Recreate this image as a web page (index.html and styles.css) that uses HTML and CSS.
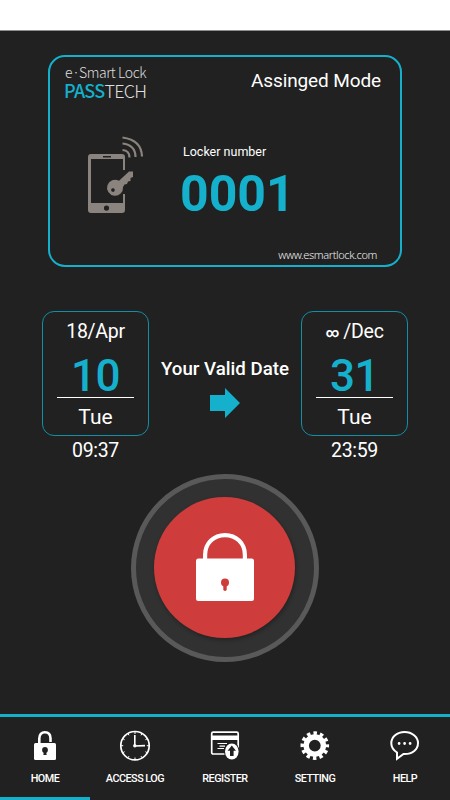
FILE: index.html
```html
<!DOCTYPE html>
<html lang="en">
<head>
<meta charset="utf-8">
<title>e-Smart Lock</title>
<link rel="stylesheet" href="styles.css">
</head>
<body>
<div class="status-bar"></div>
<main class="content">
  <section class="card">
    <header class="card-head">
      <div class="brand">
        <div class="brand-top">e·Smart Lock</div>
        <div class="brand-name"><b>PASS</b>TECH</div>
      </div>
      <div class="mode">Assinged Mode</div>
    </header>
    <div class="card-body">
      <svg class="phone" width="60" height="80" viewBox="0 0 60 80">
        <g fill="#8b837e">
          <path fill-rule="evenodd" d="M3 18H34Q37 18 37 21V34H35V23H3V67H35V58H37V74Q37 77 34 77H3Q0 77 0 74V21Q0 18 3 18ZM15 20V21.600H23V20ZM18.500 69.500A2.600 2.600 0 1 0 18.500 74.700A2.600 2.600 0 1 0 18.500 69.500Z"/>
          <path fill-rule="evenodd" d="M45 36V41L42.500 42V45L40 45.500L39 48L36.500 48.500L35 51A8 8 0 1 1 31 44.800L41 35.500H45ZM25 52.200a1.800 1.800 0 1 0 1.500 2.700a1.800 1.800 0 0 0 -1.500 -2.700Z"/>
        </g>
        <g fill="none" stroke="#8b837e" stroke-width="2.200">
          <path d="M34.500 14Q41.500 14.500 41.500 21.500"/>
          <path d="M34.500 7.500Q47.500 9 47.500 21"/>
          <path d="M34.500 1.500Q53.500 4 54 20.500"/>
        </g>
      </svg>
      <div class="locker">
        <div class="locker-label">Locker number</div>
        <div class="locker-number">0001</div>
      </div>
    </div>
    <footer class="site">www.esmartlock.com</footer>
  </section>

  <section class="validity">
    <div class="date">
      <div class="date-box">
        <div class="month">18/Apr</div>
        <div class="day">10</div>
        <div class="weekday">Tue</div>
      </div>
      <div class="time">09:37</div>
    </div>
    <div class="between">
      <div class="between-label">Your Valid Date</div>
      <svg width="30" height="30" viewBox="0 0 30 30"><path fill="#14b0cc" d="M0 7H15V0L30 15L15 30V23H0Z"/></svg>
    </div>
    <div class="date">
      <div class="date-box">
        <div class="month"><span class="infinity">∞</span> /Dec</div>
        <div class="day">31</div>
        <div class="weekday">Tue</div>
      </div>
      <div class="time">23:59</div>
    </div>
  </section>

  <div class="ring">
    <div class="lock-button">
      <svg width="58" height="68" viewBox="0 0 58 68">
        <path fill="none" stroke="#fff" stroke-width="4.200" d="M9.100 28V22C9.100 10 18 2.100 29 2.100S48.900 10 48.900 22V28"/>
        <rect y="25.500" width="58" height="42.500" rx="2.500" fill="#fff"/>
        <circle cx="29" cy="49.500" r="4" fill="#ce3d3c"/>
        <path stroke="#ce3d3c" stroke-width="3.400" stroke-linecap="round" d="M29 50V56.300"/>
      </svg>
    </div>
  </div>
</main>

<nav class="tabs">
  <div class="tab active">
    <svg width="32" height="32" viewBox="0 0 32 32">
      <path fill="none" stroke="#fff" stroke-width="2.600" d="M10.300 13V8.500C10.300 4.500 12.500 2.300 15.900 2.300S21.500 4.500 21.500 8.500V12"/>
      <rect x="5" y="13" width="22" height="17" rx="1.500" fill="#fff"/>
      <circle cx="16" cy="20" r="2.900" fill="#212121"/>
      <path fill="#212121" d="M14.900 20H17.100L17.600 25H14.400Z"/>
    </svg>
    <span>HOME</span>
  </div>
  <div class="tab">
    <svg width="32" height="32" viewBox="0 0 32 32" fill="none" stroke="#fff">
      <circle cx="16" cy="15.700" r="14.200" stroke-width="1.700"/>
      <path stroke-width="1" d="M16 2V4M16 27.500V29.500M2 15.700H4.200M27.800 15.700H30M9 3.600L10 5.300M23 3.600L22 5.300M9 27.800L10 26.100M23 27.800L22 26.100M3.900 8.700L5.600 9.700M28.100 8.700L26.400 9.700M3.900 22.700L5.600 21.700M28.100 22.700L26.400 21.700"/>
      <path stroke-width="1.600" d="M15.800 5V16L26 15.600"/>
      <circle cx="15.800" cy="15.800" r="1.700" fill="#fff" stroke="none"/>
    </svg>
    <span>ACCESS LOG</span>
  </div>
  <div class="tab">
    <svg width="32" height="32" viewBox="0 0 32 32">
      <rect x="2.700" y="2.200" width="26.500" height="21.800" rx="1.500" fill="none" stroke="#fff" stroke-width="1.700"/>
      <path fill="#fff" d="M3 5.500H29V10H3Z"/>
      <path stroke="#fff" stroke-width="1.200" d="M8.500 13.500H18M10.500 16.200H16M8.500 18.500H15"/>
      <ellipse cx="22.800" cy="21.500" rx="7.800" ry="8.800" fill="#212121"/>
      <ellipse cx="22.800" cy="21.500" rx="6.800" ry="8" fill="#fff"/>
      <path fill="#212121" d="M22.800 15.500L27 20.800H24.600V26H21V20.800H18.600Z"/>
    </svg>
    <span>REGISTER</span>
  </div>
  <div class="tab">
    <svg width="32" height="32" viewBox="0 0 32 32" fill="none" stroke="#fff">
      <circle cx="15.800" cy="15.600" r="8.600" stroke-width="5.400"/>
      <circle cx="15.800" cy="15.600" r="12.400" stroke-width="3.800" stroke-dasharray="3.500 2.993" stroke-dashoffset="1.750"/>
    </svg>
    <span>SETTING</span>
  </div>
  <div class="tab">
    <svg width="32" height="32" viewBox="0 0 32 32">
      <path fill="none" stroke="#fff" stroke-width="2" d="M8 22.500C4.300 20 2.300 17 2.300 13.200C2.300 7 8 2 15.500 2S29 7 29 13C29 19.500 23.500 24 15.500 24H14.500L8 28.800Z"/>
      <path fill="#fff" d="M8.700 13.500a1.400 1.400 0 1 0 2.800 0a1.400 1.400 0 1 0 -2.800 0M14.200 13.500a1.400 1.400 0 1 0 2.800 0a1.400 1.400 0 1 0 -2.800 0M19.700 13.500a1.400 1.400 0 1 0 2.800 0a1.400 1.400 0 1 0 -2.800 0"/>
    </svg>
    <span>HELP</span>
  </div>
</nav>
</body>
</html>
```
FILE: styles.css
```css
* { box-sizing: border-box; }

body {
  margin: 0;
  width: 450px;
  height: 800px;
  overflow: hidden;
  display: flex;
  flex-direction: column;
  background: #212121;
  color: #fff;
  font-family: Roboto, sans-serif;
}

svg { display: block; }

.status-bar {
  height: 31px;
  background: #fff;
  border-bottom: 1px solid #8c918f;
}

.content {
  flex: 1;
  display: flex;
  flex-direction: column;
  align-items: center;
  padding-top: 24px;
}

.card {
  width: 354px;
  height: 212px;
  border: 2px solid #14b0cc;
  border-radius: 17px;
  padding: 6px 19px 0 15px;
}

.card-head {
  display: flex;
  justify-content: space-between;
  height: 73px;
}

.brand {
  font-family: "Noto Sans CJK KR", "Noto Sans", sans-serif;
  font-weight: 300;
  color: #dedede;
  white-space: nowrap;
}

.brand-top {
  font-size: 14px;
  line-height: 19px;
  letter-spacing: -0.4px;
}

.brand-name {
  margin-left: -1px;
  font-size: 18px;
  line-height: 16px;
  letter-spacing: -0.75px;
}

.brand-name b {
  font-weight: 500;
  color: #14b0cc;
}

.mode {
  font-size: 19px;
  line-height: 36px;
  letter-spacing: -0.12px;
}

.card-body {
  display: flex;
  height: 108px;
  padding-left: 23px;
}

.locker {
  margin-left: 35px;
  padding-top: 7px;
}

.locker-label {
  font-size: 12.5px;
  line-height: 17px;
}

.locker-number {
  margin-left: -3px;
  font-size: 50px;
  font-weight: 700;
  line-height: 68px;
  color: #14b0cc;
}

.site {
  padding-right: 4px;
  text-align: right;
  font: 300 11px/22px "Noto Sans", sans-serif;
  letter-spacing: -0.38px;
  color: #f0f0f0;
}

.validity {
  display: flex;
  justify-content: space-between;
  width: 366px;
  height: 163px;
  margin-top: 44px;
}

.date {
  width: 107px;
  text-align: center;
}

.date-box {
  height: 125px;
  border: 1px solid #128fa6;
  border-radius: 12px;
  padding: 7px 14px 0;
}

.month {
  height: 25px;
  font-size: 19.5px;
  line-height: 25px;
  letter-spacing: -0.3px;
  white-space: nowrap;
}

.infinity {
  font-size: 13px;
  font-weight: 700;
  line-height: 1;
  vertical-align: 1px;
}

.day {
  height: 54px;
  border-bottom: 1px solid #fff;
  font-size: 44px;
  font-weight: 500;
  line-height: 65px;
  letter-spacing: -0.5px;
  color: #14b0cc;
}

.weekday {
  font-size: 21px;
  line-height: 38px;
}

.time {
  font-size: 19.5px;
  line-height: 29px;
  letter-spacing: -0.3px;
}

.between {
  display: flex;
  flex-direction: column;
  align-items: center;
  padding-top: 46px;
}

.between-label {
  height: 31px;
  font-size: 18.7px;
  font-weight: 500;
  line-height: 25px;
  white-space: nowrap;
}

.ring {
  display: flex;
  align-items: center;
  justify-content: center;
  width: 188px;
  height: 188px;
  flex-shrink: 0;
  border: 5px solid #595959;
  border-radius: 50%;
  background: #313131;
}

.lock-button {
  display: flex;
  align-items: center;
  justify-content: center;
  width: 141px;
  height: 141px;
  margin: 0 1px 1px 0;
  padding: 0 0 1px 1px;
  border-radius: 50%;
  background: #ce3d3c;
  box-shadow: 1px 2px 4px rgba(0, 0, 0, 0.3);
}

.tabs {
  display: flex;
  height: 86px;
  border-top: 3px solid #14b0cc;
}

.tab {
  flex: 1;
  display: flex;
  flex-direction: column;
  align-items: center;
  padding-top: 13px;
}

.tab.active { border-bottom: 3px solid #14b0cc; }

.tab span {
  margin-top: 10px;
  font-size: 10.8px;
  font-weight: 500;
  line-height: 14px;
  letter-spacing: -0.5px;
  white-space: nowrap;
}
```
